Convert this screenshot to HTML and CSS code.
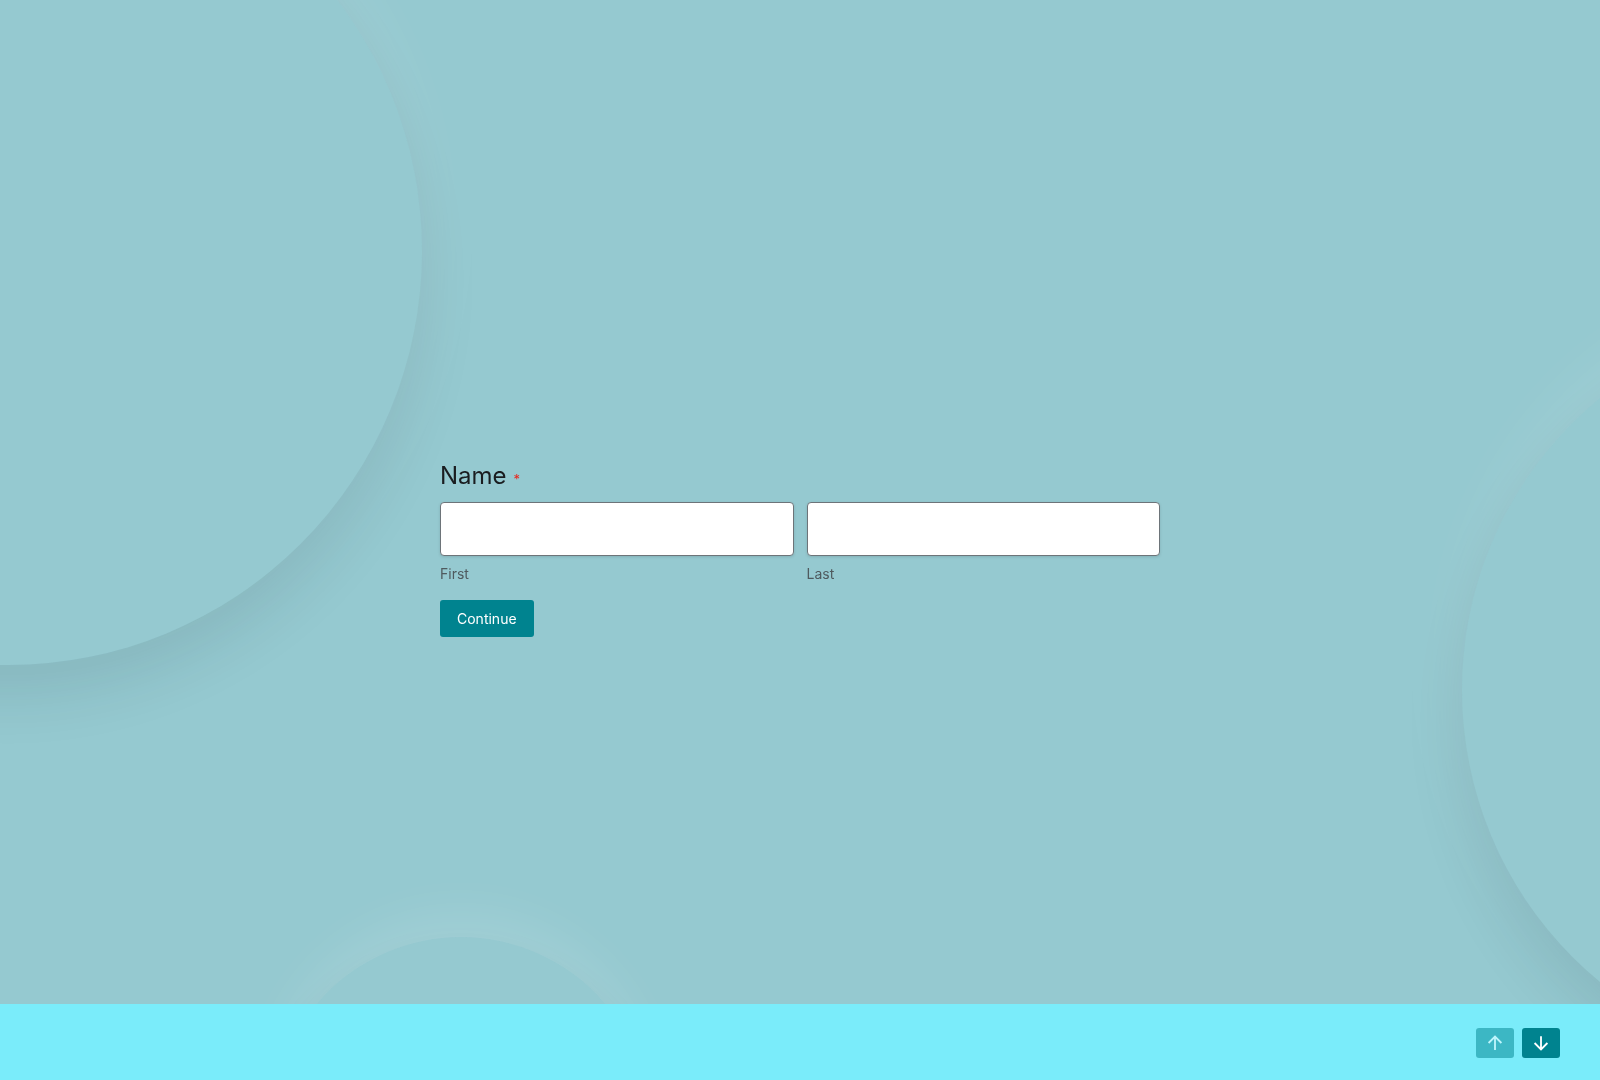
FILE: index.html
```html
<!DOCTYPE html>
<html lang="en">
<head>
<meta charset="utf-8">
<title>Name</title>
<link rel="stylesheet" href="styles.css">
</head>
<body>
<div class="decor" aria-hidden="true">
  <span class="orb orb-top"></span>
  <span class="orb orb-right"></span>
  <span class="orb orb-bottom"></span>
</div>
<div class="page">
  <main class="stage">
    <form class="card">
      <div class="q-label">Name<span class="req">*</span></div>
      <div class="name-grid">
        <div class="field">
          <input class="text-input" type="text" aria-label="First">
          <label class="sub">First</label>
        </div>
        <div class="field">
          <input class="text-input" type="text" aria-label="Last">
          <label class="sub">Last</label>
        </div>
      </div>
      <button class="btn-continue" type="button">Continue</button>
    </form>
  </main>
  <footer class="nav-bar">
    <button class="nav-btn is-disabled" type="button" aria-label="Previous">
      <svg class="nav-ico" viewBox="0 0 24 24" width="24" height="24"><path d="M12 19.5V5M5 12l7-7 7 7" fill="none" stroke="currentColor" stroke-width="2" stroke-linecap="butt" stroke-linejoin="miter"/></svg>
    </button>
    <button class="nav-btn" type="button" aria-label="Next">
      <svg class="nav-ico" viewBox="0 0 24 24" width="24" height="24"><path d="M12 4.5V19M5 12l7 7 7-7" fill="none" stroke="currentColor" stroke-width="2" stroke-linecap="butt" stroke-linejoin="miter"/></svg>
    </button>
  </footer>
</div>
</body>
</html>
```

FILE: styles.css
```css
* { box-sizing: border-box; }

html, body {
  margin: 0;
  padding: 0;
  height: 100%;
}

body {
  background: #95c9d0;
  font-family: Inter, "Noto Sans", "Liberation Sans", sans-serif;
  color: #1a1f24;
  overflow: hidden;
}

.decor {
  position: fixed;
  inset: 0;
  overflow: hidden;
  z-index: 0;
}

.orb {
  position: absolute;
  border-radius: 50%;
  background: #95c9d0;
  box-shadow: 0 -28px 60px rgba(255, 255, 255, 0.10), 0 28px 60px rgba(0, 40, 50, 0.11);
}

.orb-top {
  left: -406px;
  top: -163px;
  width: 828px;
  height: 828px;
}

.orb-right {
  left: 1462px;
  top: 312px;
  width: 756px;
  height: 756px;
}

.orb-bottom {
  left: 272px;
  top: 937px;
  width: 378px;
  height: 378px;
  box-shadow: 0 -24px 50px rgba(255, 255, 255, 0.12), 0 24px 50px rgba(0, 40, 50, 0.1);
}

.page {
  position: relative;
  z-index: 1;
  display: flex;
  flex-direction: column;
  height: 100%;
}

.stage {
  height: 1004px;
  padding-top: 461px;
}

.card {
  width: 720px;
  margin: 0 auto;
  display: flex;
  flex-direction: column;
  align-items: flex-start;
}

.q-label {
  font-size: 24px;
  line-height: 29px;
  height: 29px;
  font-weight: 400;
  color: #1a1d20;
}

.req {
  font-size: 13px;
  line-height: 1;
  color: #e8281e;
  margin-left: 7px;
}

.name-grid {
  margin-top: 12px;
  width: 100%;
  display: grid;
  grid-template-columns: 1fr 1fr;
  column-gap: 13px;
}

.field {
  display: flex;
  flex-direction: column;
}

.text-input {
  display: block;
  width: 100%;
  height: 54px;
  margin: 0;
  border: 1px solid #6d7479;
  border-radius: 4px;
  background: #ffffff;
  box-shadow: 0 1px 3px rgba(0, 0, 0, 0.12);
  font-family: inherit;
  font-size: 16px;
  padding: 0 12px;
  outline: none;
}

.sub {
  margin-top: 9px;
  font-size: 14px;
  line-height: 17px;
  color: #4f5a5e;
}

.btn-continue {
  margin-top: 18px;
  height: 37px;
  padding: 0 17px;
  border: 0;
  border-radius: 3px;
  background: #00838f;
  color: #ffffff;
  font-family: inherit;
  font-size: 14px;
  font-weight: 400;
  line-height: 17px;
  cursor: pointer;
}

.nav-bar {
  height: 76px;
  background: #7aecfa;
  display: flex;
  justify-content: flex-end;
  align-items: center;
  gap: 8px;
  padding: 2px 40px 0 0;
}

.nav-btn {
  width: 38px;
  height: 30px;
  padding: 0;
  border: 0;
  border-radius: 3px;
  background: #00838f;
  color: #ffffff;
  display: flex;
  align-items: center;
  justify-content: center;
  cursor: pointer;
}

.nav-btn.is-disabled {
  opacity: 0.5;
  cursor: default;
}

.nav-ico {
  display: block;
  width: 22px;
  height: 22px;
}
```
